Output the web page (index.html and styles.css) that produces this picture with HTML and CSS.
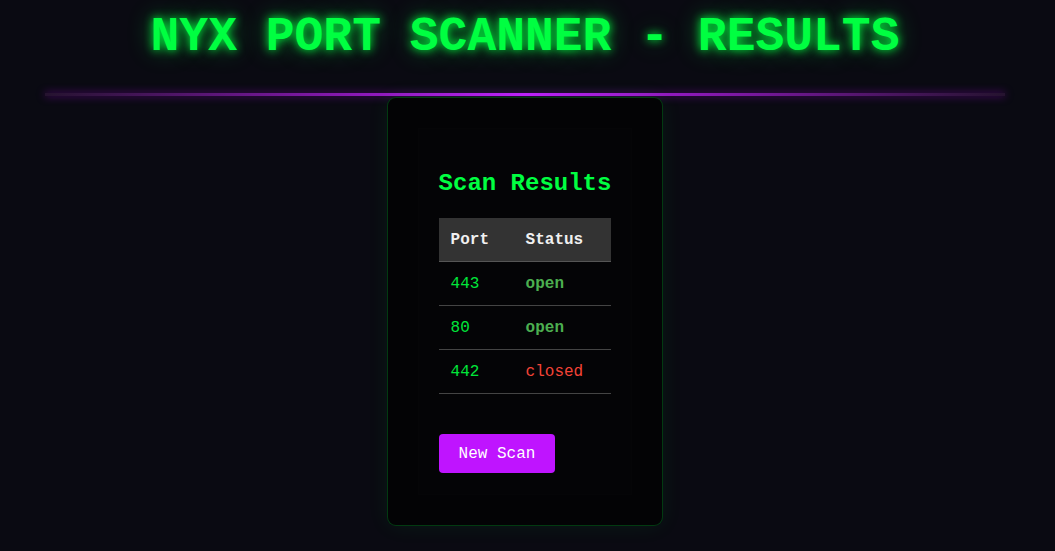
FILE: index.html
```html
<!DOCTYPE html>
<html lang="en">
<head>
<meta charset="utf-8">
<title>NYX Port Scanner - Results</title>
<link rel="stylesheet" href="styles.css">
</head>
<body>
<div class="page">
  <h1 class="title">NYX PORT SCANNER - RESULTS</h1>
  <div class="divider"></div>
  <div class="card">
    <div class="inner">
      <h2 class="heading">Scan Results</h2>
      <table class="results">
        <thead>
          <tr><th class="col-port">Port</th><th class="col-status">Status</th></tr>
        </thead>
        <tbody>
          <tr><td class="port">443</td><td class="open">open</td></tr>
          <tr><td class="port">80</td><td class="open">open</td></tr>
          <tr><td class="port">442</td><td class="closed">closed</td></tr>
        </tbody>
      </table>
      <button class="btn" type="button">New Scan</button>
    </div>
  </div>
</div>
</body>
</html>
```

FILE: styles.css
```css
html, body {
  margin: 0;
  padding: 0;
  background: #0a0a12;
  height: 100%;
  overflow: hidden;
}
body {
  font-family: "Liberation Mono", "Courier New", monospace;
  color: #e0e0e0;
}
.page {
  padding: 10px 5px 0 0;
  display: flex;
  flex-direction: column;
  align-items: center;
}
.title {
  margin: 0 0 29px;
  font-size: 48px;
  font-weight: bold;
  color: #00ff41;
  text-align: center;
  text-shadow: 0 0 10px #00ff41, 0 0 24px rgba(0, 255, 65, 0.45);
}
.divider {
  width: 960px;
  height: 3px;
  background: linear-gradient(90deg, rgba(40, 20, 50, 0.9), #c21cff 50%, rgba(40, 20, 50, 0.9));
  box-shadow: 0 0 9px rgba(191, 0, 255, 0.5);
}
.card {
  margin-top: 1px;
  padding: 30px;
  background: #030305;
  border: 1px solid rgba(0, 255, 65, 0.22);
  border-radius: 9px;
  box-shadow: 0 0 22px rgba(0, 255, 65, 0.07);
}
.inner {
  padding: 21px 20px 21px;
  border: 1px solid rgba(255, 255, 255, 0.008);
  background: #040406;
}
.heading {
  margin: 20px 0 21px;
  font-size: 24px;
  font-weight: bold;
  color: #00ff41;
}
.results {
  table-layout: fixed;
  border-collapse: collapse;
  margin-bottom: 40px;
  font-size: 16px;
}
.results th {
  background: #333333;
  color: #f0f0f0;
  text-align: left;
  font-weight: bold;
  padding: 12px 12px;
  height: 19px;
  border-bottom: 1px solid #555;
}
.results .col-port { width: 51px; }
.results .col-status { width: 73px; }
.results td {
  padding: 12px 12px;
  height: 19px;
  border-bottom: 1px solid #444;
}
.port { color: #00e63a; }
.open { color: #4caf50; font-weight: bold; }
.closed { color: #f44336; }
.btn {
  display: block;
  font-family: "Liberation Mono", "Courier New", monospace;
  font-size: 16px;
  color: #ffffff;
  background: #bf14ff;
  border: none;
  border-radius: 4px;
  padding: 10px 20px;
  height: 39px;
}
```
